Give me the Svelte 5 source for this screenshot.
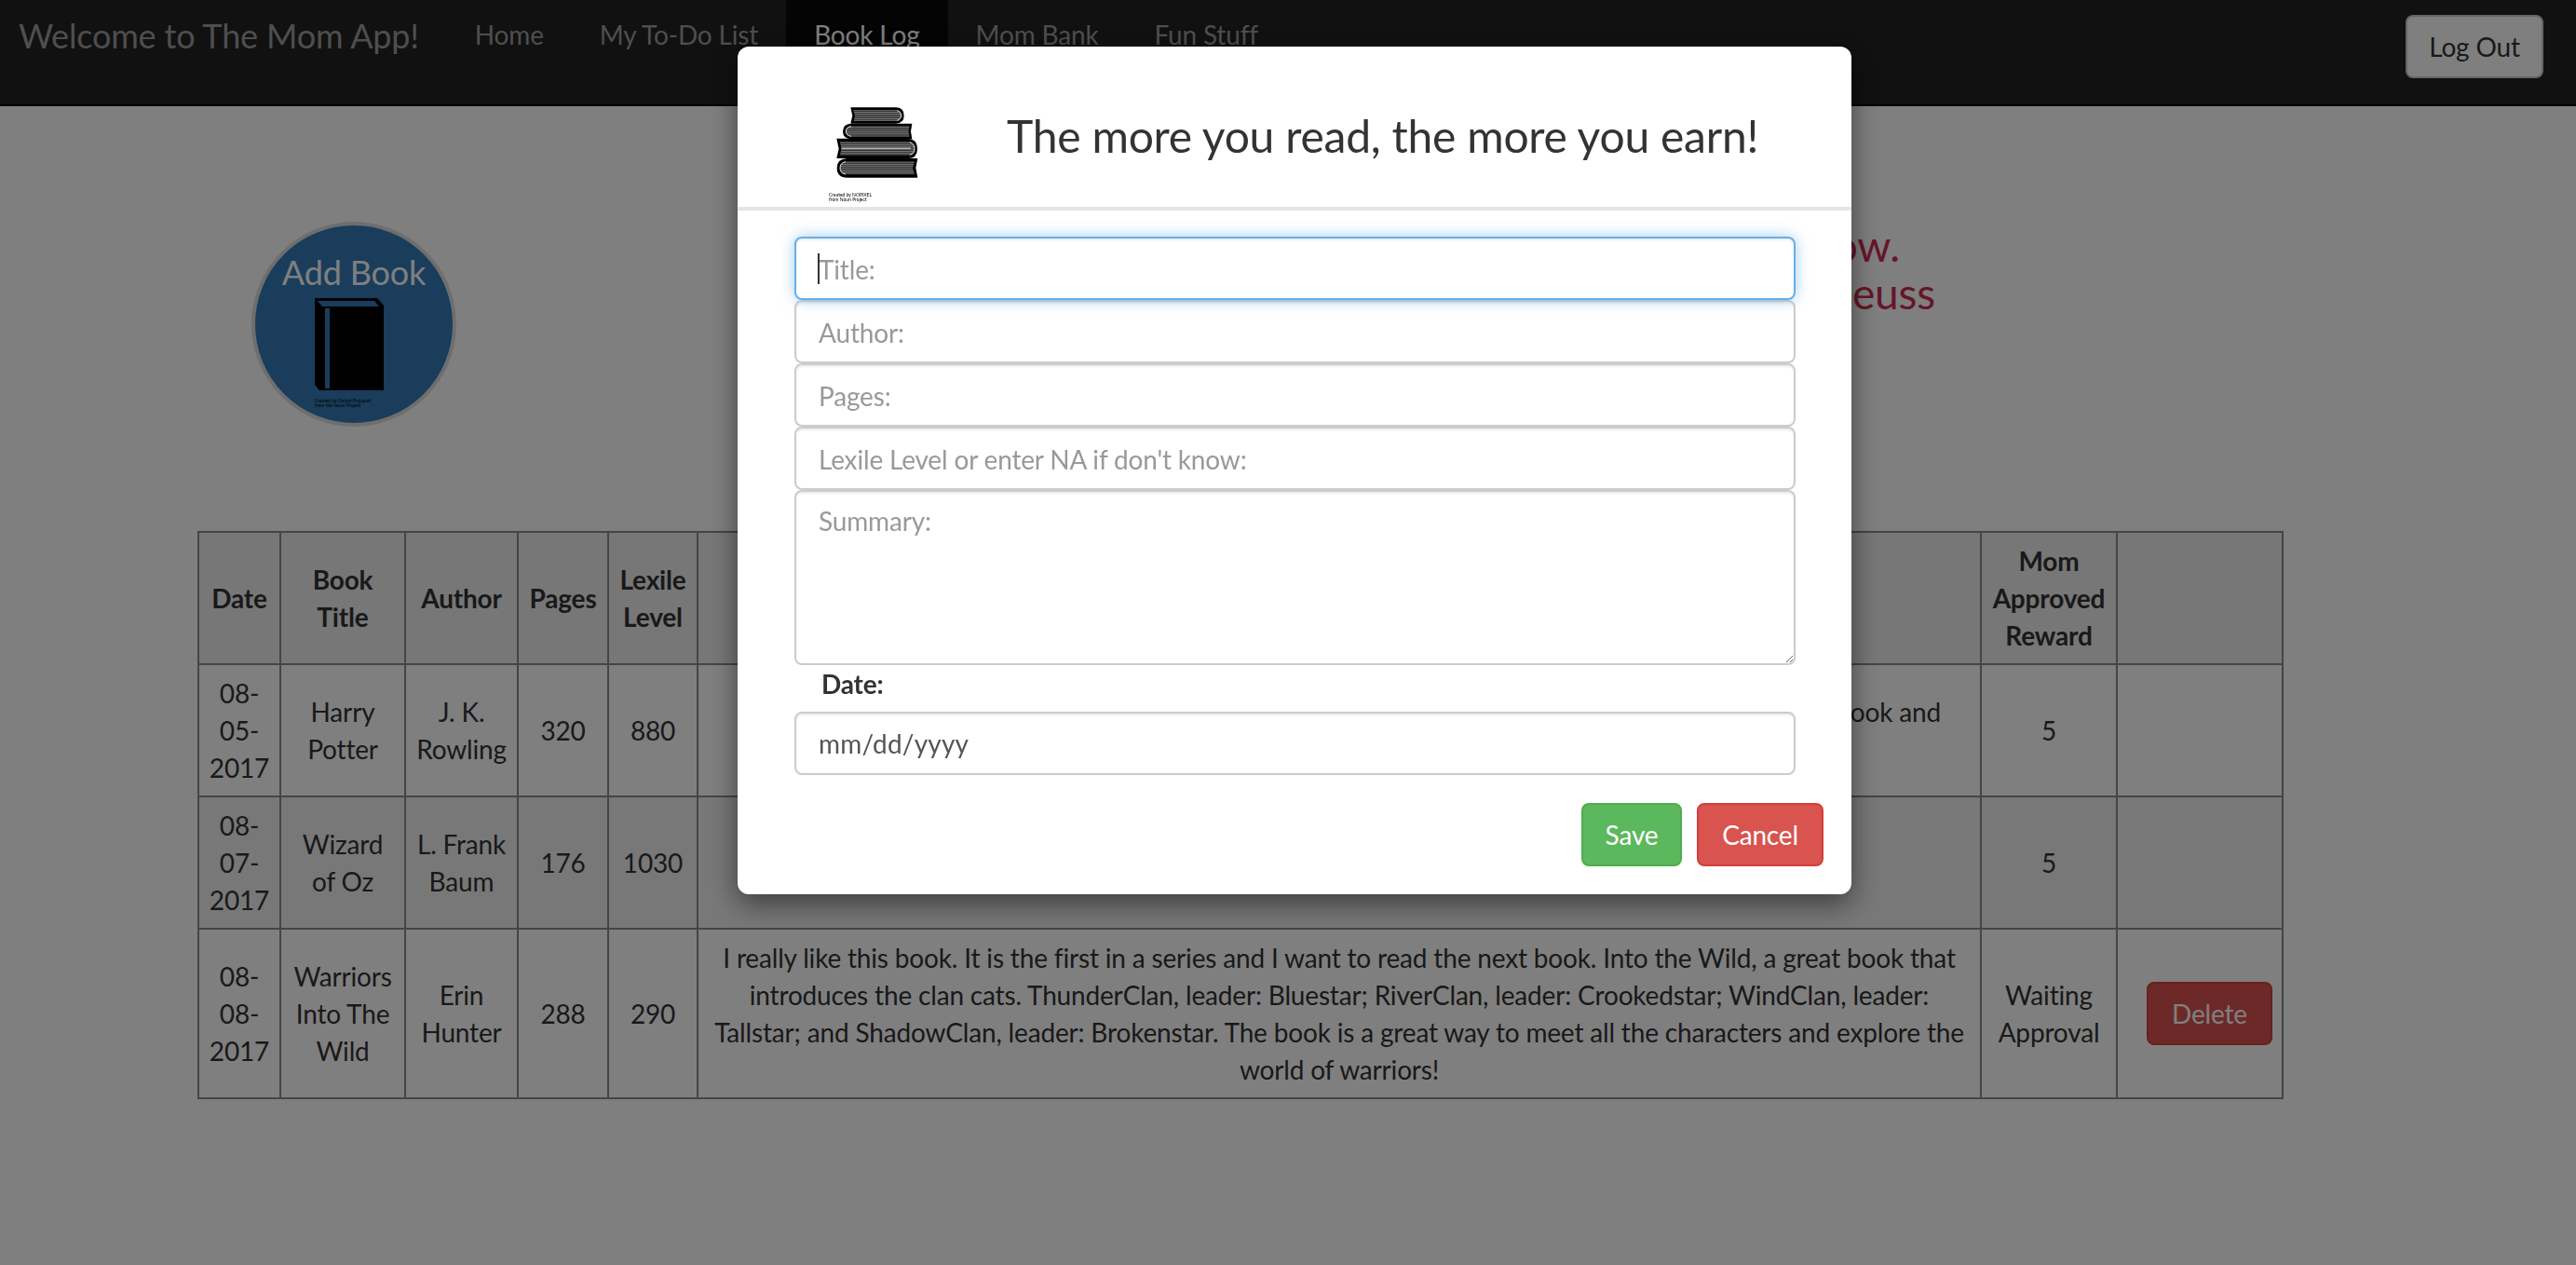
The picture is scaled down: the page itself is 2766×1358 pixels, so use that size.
<script>
  const links = ['Home', 'My To-Do List', 'Book Log', 'Mom Bank', 'Fun Stuff'];

  const rows = [
    {
      date: '08-05-2017',
      title: 'Harry Potter',
      author: 'J. K. Rowling',
      pages: 320,
      lexile: 880,
      summary:
        "Harry finds out that he's a wizard and goes to Hogwarts with Ron and Hermione. I truly loved this book and recommend it to everyone who likes magic.",
      reward: '5'
    },
    {
      date: '08-07-2017',
      title: 'Wizard of Oz',
      author: 'L. Frank Baum',
      pages: 176,
      lexile: 1030,
      summary: 'Dorothy and Toto are carried away to the land of Oz by a tornado.',
      reward: '5'
    },
    {
      date: '08-08-2017',
      title: 'Warriors Into The Wild',
      author: 'Erin Hunter',
      pages: 288,
      lexile: 290,
      summary:
        'I really like this book. It is the first in a series and I want to read the next book. Into the Wild, a great book that introduces the clan cats. ThunderClan, leader: Bluestar; RiverClan, leader: Crookedstar; WindClan, leader: Tallstar; and ShadowClan, leader: Brokenstar. The book is a great way to meet all the characters and explore the world of warriors!',
      reward: 'Waiting Approval',
      canDelete: true
    }
  ];

  const fields = ['Author:', 'Pages:', "Lexile Level or enter NA if don't know:"];
</script>

<nav class="navbar">
  <span class="brand">Welcome to The Mom App!</span>
  <ul class="nav">
    {#each links as link}
      <li class:active={link === 'Book Log'}>{link}</li>
    {/each}
  </ul>
  <button class="btn logout">Log Out</button>
</nav>

<main>
  <section class="hero">
    <div class="add-book">
      <span class="add-label">Add Book</span>
      <svg class="add-icon" viewBox="0 0 74 99" width="74" height="99">
        <path d="M0 0H67L74 8V99H5L0 93Z" fill="#000" />
        <path d="M3 3H64L69 9H8Z" fill="#337ab7" />
        <rect x="11" y="11" width="5" height="86" fill="#337ab7" />
      </svg>
      <span class="credit">Created by Dalpat Prajapati<br />from the Noun Project</span>
    </div>
    <div class="quote">
      <p class="first">The more that you read, the more things you will know.</p>
      <p>The more that you learn, the more places you'll go. - Dr. Seuss</p>
    </div>
  </section>

  <table>
    <colgroup>
      <col style="width: 88px" />
      <col style="width: 134px" />
      <col style="width: 121px" />
      <col style="width: 97px" />
      <col style="width: 96px" />
      <col />
      <col style="width: 146px" />
      <col style="width: 178px" />
    </colgroup>
    <thead>
      <tr>
        <th>Date</th>
        <th>Book Title</th>
        <th>Author</th>
        <th>Pages</th>
        <th>Lexile Level</th>
        <th>Summary</th>
        <th>Mom Approved Reward</th>
        <th></th>
      </tr>
    </thead>
    <tbody>
      {#each rows as row}
        <tr>
          <td>{row.date}</td>
          <td>{row.title}</td>
          <td>{row.author}</td>
          <td>{row.pages}</td>
          <td>{row.lexile}</td>
          <td>{row.summary}</td>
          <td>{row.reward}</td>
          <td class="action">
            {#if row.canDelete}
              <button class="btn danger">Delete</button>
            {/if}
          </td>
        </tr>
      {/each}
    </tbody>
  </table>
</main>

<div class="backdrop"></div>

<div class="modal">
  <header class="modal-header">
    <div class="stack">
      <svg viewBox="0 0 480 390" width="160" height="130">
        <defs>
          <pattern id="stripes" width="4" height="7" patternUnits="userSpaceOnUse">
            <rect width="4" height="7" fill="#333" />
            <rect width="4" height="3" fill="#7c7c7c" />
          </pattern>
        </defs>
        <path d="M190 70H335Q362 70 362 96Q362 122 335 122H190L196 96Z" fill="#000" />
        <path d="M198 78H335Q353 78 353 96Q353 114 335 114H200L204 96Z" fill="url(#stripes)" />
        <path d="M340 80Q353 84 353 96Q353 108 340 112" fill="none" stroke="#eee" stroke-width="3" />
        <path d="M388 122H195Q165 122 165 147Q165 172 195 172H388L384 147Z" fill="#000" />
        <path d="M380 130H195Q175 130 175 147Q175 164 195 164H380L376 147Z" fill="url(#stripes)" />
        <path d="M192 131Q175 134 175 147Q175 160 192 163" fill="none" stroke="#eee" stroke-width="3" />
        <path d="M145 170H375Q405 172 405 203Q405 234 375 234H145L152 203Z" fill="#000" />
        <path d="M155 180H375Q396 182 396 203Q396 224 375 224H155L161 203Z" fill="url(#stripes)" />
        <path d="M380 182Q396 186 396 203Q396 220 380 223" fill="none" stroke="#eee" stroke-width="3" />
        <rect x="160" y="200" width="224" height="4" fill="#bbb" />
        <path d="M406 234H178Q146 236 146 265Q146 296 178 296H406L400 265Z" fill="#000" />
        <path d="M396 244H178Q156 246 156 265Q156 286 178 286H396L390 265Z" fill="url(#stripes)" />
        <path d="M174 245Q156 248 156 265Q156 282 174 285" fill="none" stroke="#eee" stroke-width="3" />
      </svg>
      <span class="stack-credit">Created by NOPIXEL<br />from Noun Project</span>
    </div>
    <h2>The more you read, the more you earn!</h2>
  </header>

  <form class="modal-body">
    <div class="focused-wrap">
      <input class="control focused" type="text" placeholder="Title:" readonly />
      <span class="caret"></span>
    </div>
    {#each fields as field}
      <input class="control" type="text" placeholder={field} readonly />
    {/each}
    <textarea class="control summary" placeholder="Summary:" readonly></textarea>
    <label class="date-label" for="date">Date:</label>
    <input id="date" class="control date" type="text" value="mm/dd/yyyy" readonly />
  </form>

  <footer class="modal-footer">
    <button class="btn success">Save</button>
    <button class="btn cancel">Cancel</button>
  </footer>
</div>

<style>
  :global(body) {
    margin: 0;
    background: #fff;
    font-family: Lato, 'Open Sans', sans-serif;
    font-size: 28px;
    line-height: 40px;
    letter-spacing: -0.17px;
    color: #333;
  }

  .navbar {
    height: 112px;
    background: #222;
    border-bottom: 2px solid #080808;
    display: flex;
    align-items: flex-start;
    color: #9d9d9d;
  }

  .brand {
    font-size: 36px;
    line-height: 40px;
    padding: 18px 30px 0 20px;
  }

  .nav {
    display: flex;
    list-style: none;
    margin: 0;
    padding: 0;
  }

  .nav li {
    padding: 17px 30px 57px;
  }

  .nav li.active {
    background: #080808;
    color: #fff;
  }

  .btn {
    font: inherit;
    letter-spacing: inherit;
    height: 68px;
    border-radius: 8px;
    border: 2px solid transparent;
    padding: 0 24px;
  }

  .logout {
    margin: 16px 35px 0 auto;
    background: #fff;
    border-color: #ccc;
    color: #333;
    width: 148px;
    padding: 0;
  }

  .hero {
    padding: 124px 0 0 270px;
    height: 456px;
    box-sizing: border-box;
    display: flex;
    justify-content: space-between;
  }

  .add-book {
    width: 220px;
    height: 220px;
    box-sizing: border-box;
    border: 4px solid #ddd;
    border-radius: 50%;
    background: #337ab7;
    display: flex;
    flex-direction: column;
    align-items: center;
    color: #fff;
  }

  .add-label {
    font-size: 36px;
    line-height: 48px;
    margin-top: 26px;
    white-space: nowrap;
  }

  .add-icon {
    display: block;
    margin: 4px 0 0 -10px;
  }

  .credit {
    align-self: flex-start;
    margin: 9px 0 0 64px;
    font-size: 5px;
    line-height: 5px;
    letter-spacing: 0;
    color: #000;
    white-space: nowrap;
  }

  .quote {
    margin: 0 688px 0 0;
    text-align: right;
    color: #cb2d50;
    font-size: 46px;
    line-height: 51px;
  }

  .quote p {
    margin: 0;
    white-space: nowrap;
  }

  .quote .first {
    padding-right: 38px;
  }

  table {
    margin-left: 212px;
    width: 2240px;
    table-layout: fixed;
    border-collapse: collapse;
    text-align: center;
  }

  th,
  td {
    border: 2px solid #8a8a8a;
    padding: 10px;
    vertical-align: middle;
    color: #333;
  }

  th {
    font-weight: 700;
    background: #eee;
  }

  th:nth-child(3),
  th:nth-child(4),
  td:nth-child(3),
  td:nth-child(4),
  td:nth-child(5),
  th:nth-child(5) {
    padding-left: 4px;
    padding-right: 4px;
  }

  tbody tr:nth-child(2) td {
    background: #f0f0f0;
  }

  td.action {
    text-align: right;
    padding: 0 10px;
  }

  .danger {
    background: #d9534f;
    border-color: #d43f3a;
    color: #fff;
    width: 135px;
    padding: 0;
  }

  .backdrop {
    position: fixed;
    inset: 0;
    background: rgba(0, 0, 0, 0.5);
  }

  .modal {
    position: fixed;
    top: 50px;
    left: 792px;
    width: 1196px;
    height: 910px;
    background: #fff;
    border-radius: 12px;
    box-shadow: 0 10px 30px rgba(0, 0, 0, 0.5);
    display: flex;
    flex-direction: column;
  }

  .modal-header {
    height: 172px;
    border-bottom: 4px solid #e5e5e5;
    display: flex;
    align-items: center;
    gap: 71px;
    padding-left: 58px;
    flex: none;
  }

  .stack {
    position: relative;
    width: 160px;
    height: 130px;
    align-self: flex-end;
  }

  .stack svg {
    display: block;
  }

  .stack-credit {
    position: absolute;
    left: 40px;
    top: 115px;
    font-size: 5px;
    line-height: 5px;
    letter-spacing: 0;
    color: #000;
    white-space: nowrap;
  }

  h2 {
    margin: 18px 0 0;
    font-size: 48px;
    line-height: 53px;
    font-weight: 400;
    letter-spacing: -0.24px;
    white-space: nowrap;
  }

  .modal-body {
    padding: 28px 60px 0 61px;
    display: flex;
    flex-direction: column;
  }

  .control {
    display: block;
    width: 100%;
    box-sizing: border-box;
    height: 68px;
    margin: 0;
    padding: 14px 24px 12px;
    font: inherit;
    letter-spacing: inherit;
    color: #555;
    background: #fff;
    border: 2px solid #ccc;
    border-radius: 8px;
    box-shadow: inset 0 2px 2px rgba(0, 0, 0, 0.075);
    outline: none;
  }

  .control::placeholder {
    color: #999;
    opacity: 1;
  }

  .focused-wrap {
    position: relative;
  }

  .focused {
    border-color: #66afe9;
    box-shadow:
      inset 0 2px 2px rgba(0, 0, 0, 0.075),
      0 0 16px rgba(102, 175, 233, 0.6);
  }

  .caret {
    position: absolute;
    left: 25px;
    top: 18px;
    width: 2px;
    height: 33px;
    background: #333;
  }

  .summary {
    height: 188px;
    padding-top: 11px;
  }

  .date {
    letter-spacing: 0.2px;
    padding: 12px 24px;
  }

  .date-label {
    font-weight: 700;
    line-height: 40px;
    padding-left: 29px;
    margin: 0 0 10px;
  }

  .modal-footer {
    margin-top: 30px;
    padding-right: 30px;
    display: flex;
    justify-content: flex-end;
    gap: 16px;
  }

  .success {
    background: #5cb85c;
    border-color: #4cae4c;
    color: #fff;
    width: 108px;
    padding: 0;
  }

  .cancel {
    background: #d9534f;
    border-color: #d43f3a;
    color: #fff;
    width: 136px;
    padding: 0;
  }
</style>
